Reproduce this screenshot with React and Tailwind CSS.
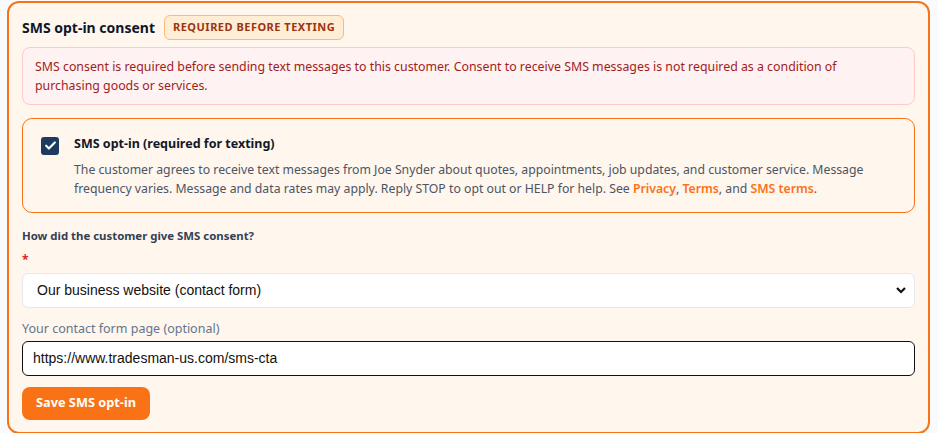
import React from 'react';

const App = () => {
  return (
    <div className="min-h-screen bg-[#f8fafc] pl-[7px] pr-[8px] pt-px" style={{ fontFamily: '"Noto Sans", sans-serif' }}>
      <div className="rounded-xl border-2 border-[#f97316] bg-[#fff6ee] px-[13px] pt-[12px] pb-[12px]">
        {/* Header */}
        <div className="flex items-center gap-[9px]">
          <h2 className="text-[14px] font-bold text-[#0f172a]">SMS opt-in consent</h2>
          <span className="rounded-md border border-[#fdba74] bg-[#ffedd5] px-2 py-[3px] text-[11px] font-bold uppercase tracking-[0.045em] text-[#9a3412]">
            Required before texting
          </span>
        </div>

        {/* Notice */}
        <div className="mt-[7px] rounded-lg border border-[#fecaca] bg-[#fef2f2] px-3 py-[9px] text-[12.35px] leading-[19px] text-[#a11d1d]">
          SMS consent is required before sending text messages to this customer. Consent to receive SMS messages is not required as a condition of purchasing goods or services.
        </div>

        {/* Opt-in box */}
        <div className="mt-[13px] flex gap-[15px] rounded-[10px] border border-[#f97316] px-[18px] pt-[15px] pb-[14px]">
          <div className="mt-[3px] flex h-[18px] w-[18px] shrink-0 items-center justify-center rounded-[3px] bg-[#1e3a5f]">
            <svg width="13" height="13" viewBox="0 0 24 24" fill="none" stroke="white" strokeWidth="4" strokeLinecap="round" strokeLinejoin="round">
              <path d="M4 12.5l5 5L20 6.5" />
            </svg>
          </div>
          <div>
            <div className="text-[12.5px] font-bold leading-[19px] text-[#111827]">SMS opt-in (required for texting)</div>
            <p className="mt-[7px] text-[12.25px] leading-[19px] text-[#4b5563]">
              The customer agrees to receive text messages from Joe Snyder about quotes, appointments, job updates, and customer service. Message frequency varies. Message and data rates may apply. Reply STOP to opt out or HELP for help. See{' '}
              <span className="font-semibold text-[#f97316]">Privacy</span>, <span className="font-semibold text-[#f97316]">Terms</span>, and{' '}
              <span className="font-semibold text-[#f97316]">SMS terms</span>.
            </p>
          </div>
        </div>

        {/* Consent method */}
        <div className="mt-[14px] text-[11.4px] font-bold leading-[17px] text-[#334155]">How did the customer give SMS consent?</div>
        <div className="mt-[7px] text-[12px] font-bold leading-[17px] text-[#dc2626]">*</div>
        <div className="relative mt-[5px]">
          <select
            defaultValue="website"
            className="h-[35px] w-full appearance-none rounded-md border border-[#e5e7eb] bg-white pl-[14px] text-[14px] text-[#111] outline-none"
            style={{ fontFamily: '"Liberation Sans", Arial, sans-serif' }}
          >
            <option value="website">Our business website (contact form)</option>
          </select>
          <svg className="pointer-events-none absolute right-[9px] top-[13px]" width="10" height="8" viewBox="0 0 10 8" fill="none" stroke="#111" strokeWidth="2.2">
            <path d="M1 2l4 4 4-4" />
          </svg>
        </div>

        <div className="mt-[12px] text-[12.5px] leading-[17px] text-[#64748b]">Your contact form page (optional)</div>
        <input
          defaultValue="https://www.tradesman-us.com/sms-cta"
          className="mt-[4px] h-[35px] w-full rounded-md border-[1.5px] border-[#111] bg-white px-[10px] text-[14px] text-[#111] outline-none"
          style={{ fontFamily: '"Liberation Sans", Arial, sans-serif' }}
        />

        <button className="mt-[11px] h-[33px] w-[128px] rounded-lg bg-[#f97316] text-[12.75px] font-bold text-white">
          Save SMS opt-in
        </button>
      </div>
    </div>
  );
};

export default App;
